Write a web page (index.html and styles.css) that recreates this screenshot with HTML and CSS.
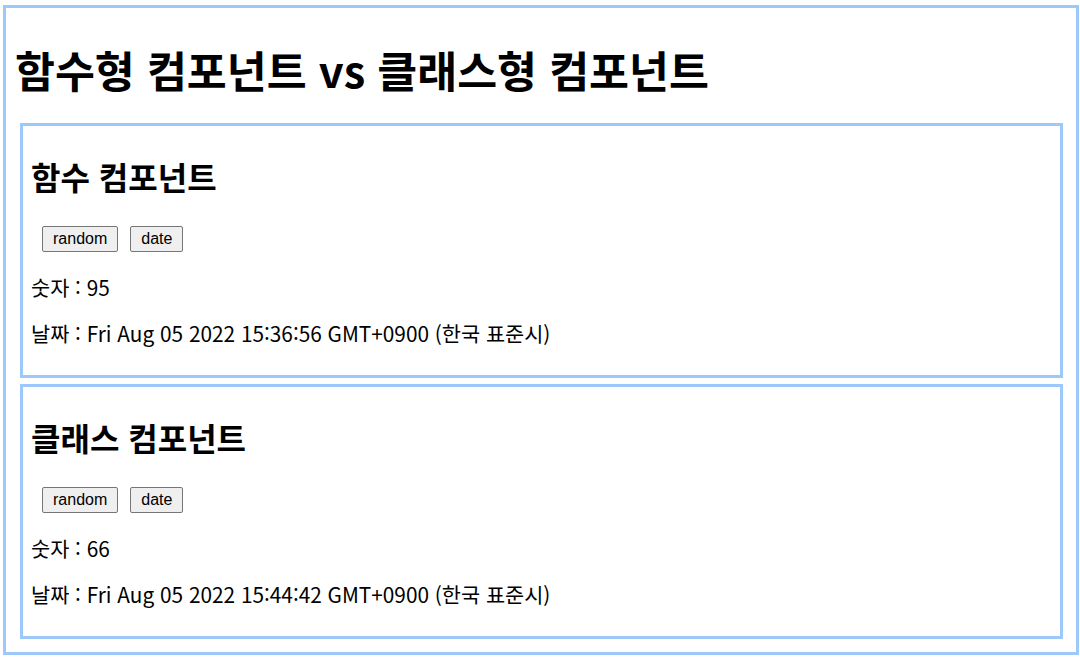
FILE: index.html
```html
<!DOCTYPE html>
<html lang="ko">
<head>
<meta charset="utf-8">
<title>함수형 컴포넌트 vs 클래스형 컴포넌트</title>
<link rel="stylesheet" href="styles.css">
</head>
<body>
<div class="app">
  <h1 class="title">함수형 컴포넌트 vs 클래스형 컴포넌트</h1>
  <div class="panel">
    <h2 class="panel-title">함수 컴포넌트</h2>
    <div class="actions">
      <button class="btn">random</button>
      <button class="btn">date</button>
    </div>
    <p class="line">숫자 : 95</p>
    <p class="line">날짜 : Fri Aug 05 2022 15:36:56 GMT+0900 (한국 표준시)</p>
  </div>
  <div class="panel">
    <h2 class="panel-title">클래스 컴포넌트</h2>
    <div class="actions">
      <button class="btn">random</button>
      <button class="btn">date</button>
    </div>
    <p class="line">숫자 : 66</p>
    <p class="line">날짜 : Fri Aug 05 2022 15:44:42 GMT+0900 (한국 표준시)</p>
  </div>
</div>
</body>
</html>
```

FILE: styles.css
```css
html, body {
  background: #ffffff;
}
body {
  margin: 5px 1px 0 3px;
  font-family: "Noto Sans CJK KR", "Noto Sans", sans-serif;
  color: #000000;
}
.app {
  border: 3px solid #9cc8fc;
  padding: 0 13px 13px 9px;
  display: flex;
  flex-direction: column;
  gap: 6px;
}
.title {
  font-size: 43.4px;
  font-weight: 700;
  line-height: 54px;
  margin: 34px 0 21px 0;
}
.panel {
  border: 3px solid #9cc8fc;
  margin-left: 5px;
  padding: 0 8px 29px 8px;
}
.panel-title {
  font-size: 32px;
  font-weight: 700;
  line-height: 40px;
  margin: 30px 0 0 0;
}
.actions {
  display: flex;
  gap: 12px;
  margin: 30px 0 0 11px;
}
.btn {
  font-family: "Liberation Sans", Arial, sans-serif;
  font-size: 16px;
  height: 26px;
  padding: 0 10px;
  background: #efefef;
  border: 1px solid #767676;
  border-radius: 2px;
  color: #000000;
}
.line {
  font-size: 20.8px;
  line-height: 26px;
  margin: 20px 0 0 0;
}
.actions + .line {
  margin-top: 22px;
}
```
